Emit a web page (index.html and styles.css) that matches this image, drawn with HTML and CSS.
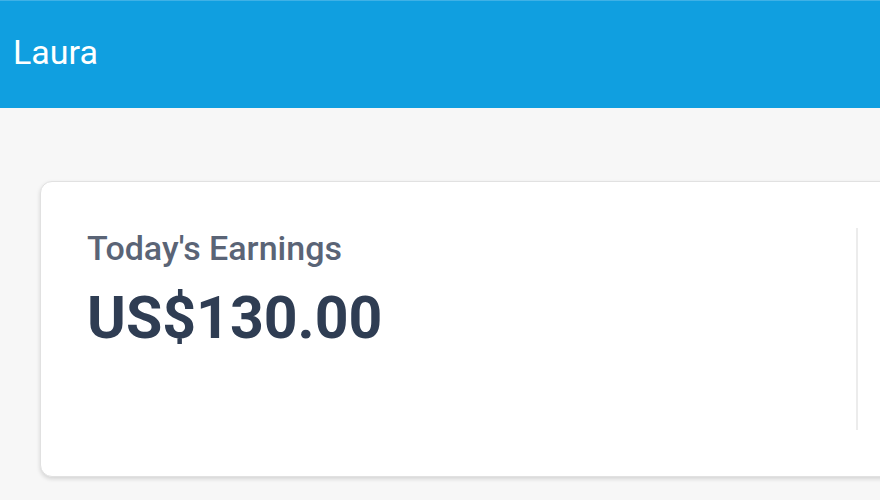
FILE: index.html
```html
<!DOCTYPE html>
<html>
<head>
<meta charset="utf-8">
<link rel="stylesheet" href="styles.css">
</head>
<body>
<header class="topbar">
  <span class="user-name">Laura</span>
</header>
<main class="content">
  <section class="card">
    <div class="stat">
      <div class="stat-label">Today's Earnings</div>
      <div class="stat-value">US$130.00</div>
    </div>
    <div class="stat stat-divided"></div>
  </section>
</main>
</body>
</html>
```

FILE: styles.css
```css
html, body {
  margin: 0;
  padding: 0;
}
body {
  background: #f7f7f7;
  font-family: Roboto, "Liberation Sans", sans-serif;
  width: 880px;
  height: 500px;
  overflow: hidden;
}
.topbar {
  box-sizing: border-box;
  height: 108px;
  background: #109fe0;
  border-top: 1px solid #3fb1e6;
  padding: 31px 0 0 13px;
}
.user-name {
  color: #ffffff;
  font-size: 34px;
  line-height: 40px;
  font-weight: 400;
}
.content {
  padding: 73px 0 0 40px;
}
.card {
  box-sizing: border-box;
  width: 1100px;
  height: 296px;
  background: #ffffff;
  border: 1px solid #e1e1e1;
  border-radius: 12px;
  box-shadow: 0 2px 4px rgba(0, 0, 0, 0.14);
  padding: 46px 0;
  display: grid;
  grid-template-columns: 815px 1fr;
}
.stat {
  padding-left: 46px;
  height: 202px;
}
.stat-divided {
  border-left: 2px solid #ececec;
}
.stat-label {
  color: #5a6476;
  font-size: 34px;
  font-weight: 500;
  line-height: 40px;
}
.stat-value {
  margin-top: 18px;
  color: #2f3d53;
  font-size: 59px;
  font-weight: 700;
  line-height: 64px;
}
```
